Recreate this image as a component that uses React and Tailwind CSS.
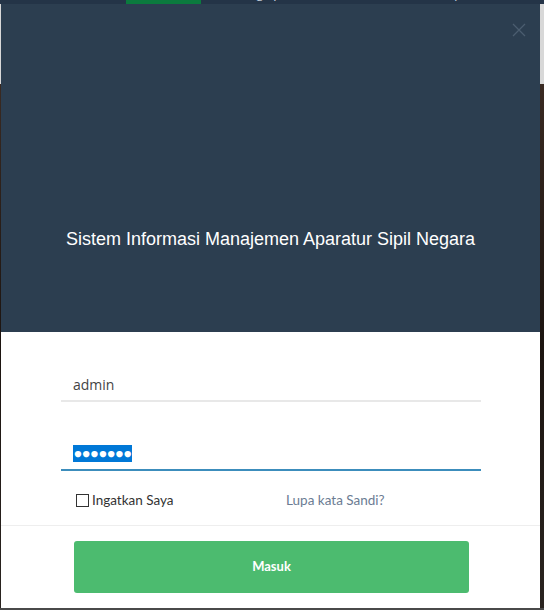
import { useState } from 'react';

const navItems = [
    { label: 'Beranda', active: true },
    { label: 'Tentang Aplikasi' },
    { label: 'Berita' },
    { label: 'Info Layanan' },
    { label: 'Pengaduan' },
];

const App = () => {
    const [username, setUsername] = useState('admin');
    const [password, setPassword] = useState('password');

    return (
        <div className="relative w-[544px] h-[610px] overflow-hidden bg-[#4a4a4a]" style={{ fontFamily: 'Lato, "Open Sans", sans-serif' }}>
            {/* Background page (scrolled, mostly hidden) */}
            <div className="flex flex-col h-full">
                <nav className="flex h-[20px] -mt-[16px] bg-[#243447] pl-[126px] text-[12px] leading-[14px] text-[#cfd8e3] whitespace-nowrap">
                    {navItems.map(item => (
                        <span
                            key={item.label}
                            className={`h-full pt-[4px] shrink-0 ${item.active ? 'bg-[#0b7a3e] text-white w-[75px] text-center' : 'px-[20px]'}`}
                        >
                            {item.label}
                        </span>
                    ))}
                </nav>
                <div className="h-[80px] bg-[#d8d8d8]"></div>
                <div className="flex-1 bg-gradient-to-b from-[#3a2a22] via-[#1c1410] to-[#2a2420]"></div>
                <div className="h-[2px] bg-[#4a4a4a]"></div>
            </div>

            {/* Login modal */}
            <div className="absolute left-[1px] top-[4px] w-[539px] h-[604px] bg-white flex flex-col">
                <div className="relative h-[328px] bg-[#2c3e50] flex items-center justify-center">
                    <button className="absolute right-[14px] top-[19px] text-[#4b5d6f]">
                        <svg width="14" height="14" viewBox="0 0 14 14" fill="none" stroke="currentColor" strokeWidth="1.3">
                            <path d="M1 1L13 13M13 1L1 13" />
                        </svg>
                    </button>
                    <h2 className="mt-[-178px] pt-[320px] text-white text-[18px] leading-none" style={{ fontFamily: '"Liberation Sans", Arial, sans-serif' }}>
                        Sistem Informasi Manajemen Aparatur Sipil Negara
                    </h2>
                </div>

                <div className="px-[60px] pt-[36px]">
                    <input
                        value={username}
                        onChange={e => setUsername(e.target.value)}
                        className="w-[420px] h-[34px] px-3 text-[14px] text-[#444] border-b-2 border-[#e8e8e8] outline-none"
                        style={{ fontFamily: '"Open Sans", sans-serif' }}
                    />
                    <div className="mt-[35px] w-[420px] h-[34px] px-3 flex items-center border-b-2 border-[#3c8dbc]">
                        <span className="bg-[#0078d7] text-white text-[13px] leading-[17px] pl-[1px] tracking-[0.5px]">
                            {'●'.repeat(password.length - 1)}
                        </span>
                        <input type="hidden" value={password} onChange={e => setPassword(e.target.value)} />
                    </div>

                    <div className="flex items-center mt-[21px] h-[16px] text-[13.5px]">
                        <label className="flex items-center gap-[3px] ml-[15px] w-[210px] text-[#333]">
                            <span className="w-[13px] h-[13px] border border-[#333] bg-white"></span>
                            Ingatkan Saya
                        </label>
                        <a className="text-[#6b7c93]">Lupa kata Sandi?</a>
                    </div>
                </div>

                <div className="mt-[17px] border-t border-[#eeeeee] px-[73px] pt-[15px]">
                    <button className="w-[395px] h-[52px] rounded-[3px] bg-[#4cbb6f] text-white font-bold text-[13px]">
                        Masuk
                    </button>
                </div>
            </div>
        </div>
    );
};

export default App;
